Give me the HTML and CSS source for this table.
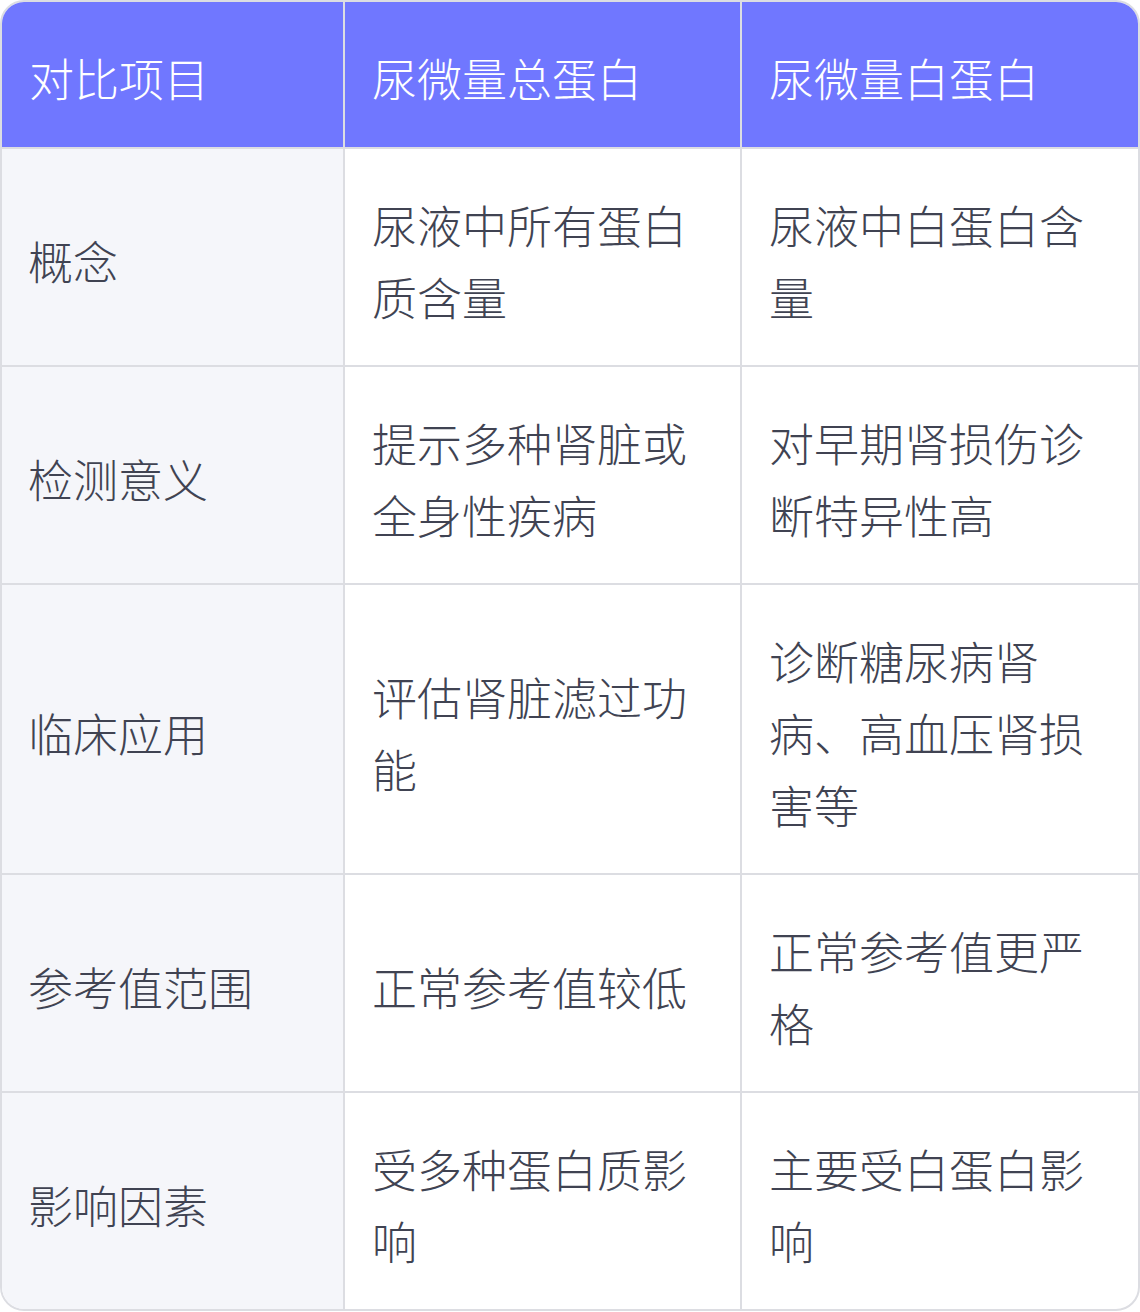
FILE: index.html
```html
<!DOCTYPE html>
<html lang="zh-CN">
<head>
<meta charset="utf-8">
<title>尿微量总蛋白 vs 尿微量白蛋白</title>
<link rel="stylesheet" href="styles.css">
</head>
<body>
<div class="wrap">
  <table class="cmp">
    <colgroup>
      <col class="c1"><col class="c2"><col class="c3">
    </colgroup>
    <thead>
      <tr><th>对比项目</th><th>尿微量总蛋白</th><th>尿微量白蛋白</th></tr>
    </thead>
    <tbody>
      <tr><td>概念</td><td>尿液中所有蛋白质含量</td><td>尿液中白蛋白含量</td></tr>
      <tr><td>检测意义</td><td>提示多种肾脏或全身性疾病</td><td>对早期肾损伤诊断特异性高</td></tr>
      <tr><td>临床应用</td><td>评估肾脏滤过功能</td><td>诊断糖尿病肾病、高血压肾损害等</td></tr>
      <tr><td>参考值范围</td><td>正常参考值较低</td><td>正常参考值更严格</td></tr>
      <tr><td>影响因素</td><td>受多种蛋白质影响</td><td>主要受白蛋白影响</td></tr>
    </tbody>
  </table>
</div>
</body>
</html>
```

FILE: styles.css
```css
html, body {
  margin: 0;
  padding: 0;
  background: #ffffff;
}
.wrap {
  box-sizing: border-box;
  width: 1140px;
  border: 2px solid #dcdde2;
  border-radius: 24px;
  overflow: hidden;
  background: #ffffff;
}
.cmp {
  width: 100%;
  border-collapse: collapse;
  table-layout: fixed;
  font-family: "Noto Sans CJK SC", "Noto Sans", sans-serif;
  font-size: 45px;
  font-weight: 300;
  line-height: 72px;
  color: #404352;
}
.c1 { width: 342px; }
.c2 { width: 397px; }
.c3 { width: auto; }
.cmp th, .cmp td {
  padding: 40px 26px 32px 27px;
  text-align: left;
  vertical-align: middle;
  font-weight: 300;
  border-right: 2px solid #dcdde2;
  border-bottom: 2px solid #dcdde2;
}
.cmp th:last-child, .cmp td:last-child {
  border-right: none;
}
.cmp tbody tr:last-child td {
  border-bottom: none;
}
.cmp th {
  background: #7077ff;
  color: #ffffff;
  padding-top: 40px;
  padding-bottom: 33px;
}
.cmp td:first-child {
  background: #f5f6fa;
  padding-left: 26px;
}
```
